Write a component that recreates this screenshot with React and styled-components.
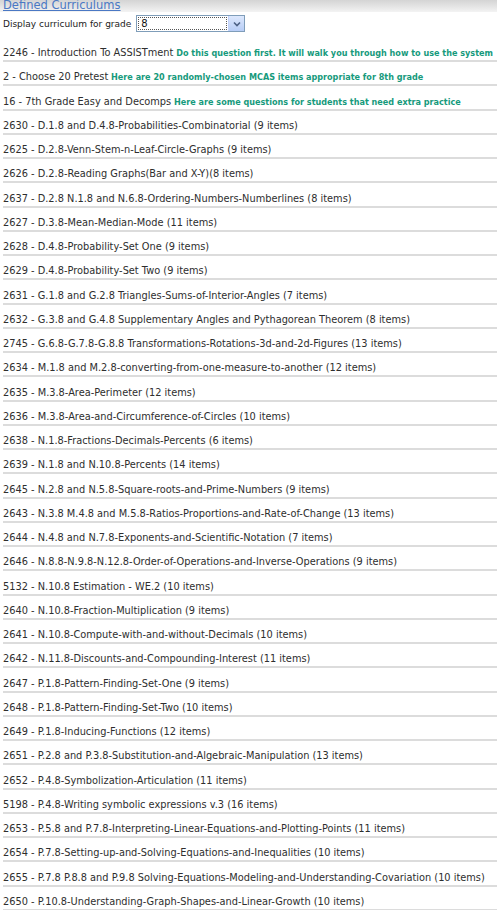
import React from "react";
import styled, { createGlobalStyle } from "styled-components";

const GlobalStyle = createGlobalStyle`
  body {
    margin: 0;
    background: #fff;
    font-family: "DejaVu Sans", Verdana, sans-serif;
    color: #333;
  }
`;

const curricula = [
  { id: 2246, name: "Introduction To ASSISTment", note: "Do this question first. It will walk you through how to use the system" },
  { id: 2, name: "Choose 20 Pretest", note: "Here are 20 randomly-chosen MCAS items appropriate for 8th grade" },
  { id: 16, name: "7th Grade Easy and Decomps", note: "Here are some questions for students that need extra practice" },
  { id: 2630, name: "D.1.8 and D.4.8-Probabilities-Combinatorial (9 items)" },
  { id: 2625, name: "D.2.8-Venn-Stem-n-Leaf-Circle-Graphs (9 items)" },
  { id: 2626, name: "D.2.8-Reading Graphs(Bar and X-Y)(8 items)" },
  { id: 2637, name: "D.2.8 N.1.8 and N.6.8-Ordering-Numbers-Numberlines (8 items)" },
  { id: 2627, name: "D.3.8-Mean-Median-Mode (11 items)" },
  { id: 2628, name: "D.4.8-Probability-Set One (9 items)" },
  { id: 2629, name: "D.4.8-Probability-Set Two (9 items)" },
  { id: 2631, name: "G.1.8 and G.2.8 Triangles-Sums-of-Interior-Angles (7 items)" },
  { id: 2632, name: "G.3.8 and G.4.8 Supplementary Angles and Pythagorean Theorem (8 items)" },
  { id: 2745, name: "G.6.8-G.7.8-G.8.8 Transformations-Rotations-3d-and-2d-Figures (13 items)" },
  { id: 2634, name: "M.1.8 and M.2.8-converting-from-one-measure-to-another (12 items)" },
  { id: 2635, name: "M.3.8-Area-Perimeter (12 items)" },
  { id: 2636, name: "M.3.8-Area-and-Circumference-of-Circles (10 items)" },
  { id: 2638, name: "N.1.8-Fractions-Decimals-Percents (6 items)" },
  { id: 2639, name: "N.1.8 and N.10.8-Percents (14 items)" },
  { id: 2645, name: "N.2.8 and N.5.8-Square-roots-and-Prime-Numbers (9 items)" },
  { id: 2643, name: "N.3.8 M.4.8 and M.5.8-Ratios-Proportions-and-Rate-of-Change (13 items)" },
  { id: 2644, name: "N.4.8 and N.7.8-Exponents-and-Scientific-Notation (7 items)" },
  { id: 2646, name: "N.8.8-N.9.8-N.12.8-Order-of-Operations-and-Inverse-Operations (9 items)" },
  { id: 5132, name: "N.10.8 Estimation - WE.2 (10 items)" },
  { id: 2640, name: "N.10.8-Fraction-Multiplication (9 items)" },
  { id: 2641, name: "N.10.8-Compute-with-and-without-Decimals (10 items)" },
  { id: 2642, name: "N.11.8-Discounts-and-Compounding-Interest (11 items)" },
  { id: 2647, name: "P.1.8-Pattern-Finding-Set-One (9 items)" },
  { id: 2648, name: "P.1.8-Pattern-Finding-Set-Two (10 items)" },
  { id: 2649, name: "P.1.8-Inducing-Functions (12 items)" },
  { id: 2651, name: "P.2.8 and P.3.8-Substitution-and-Algebraic-Manipulation (13 items)" },
  { id: 2652, name: "P.4.8-Symbolization-Articulation (11 items)" },
  { id: 5198, name: "P.4.8-Writing symbolic expressions v.3 (16 items)" },
  { id: 2653, name: "P.5.8 and P.7.8-Interpreting-Linear-Equations-and-Plotting-Points (11 items)" },
  { id: 2654, name: "P.7.8-Setting-up-and-Solving-Equations-and-Inequalities (10 items)" },
  { id: 2655, name: "P.7.8 P.8.8 and P.9.8 Solving-Equations-Modeling-and-Understanding-Covariation (10 items)" },
  { id: 2650, name: "P.10.8-Understanding-Graph-Shapes-and-Linear-Growth (10 items)" },
];

const Page = styled.div`
  width: 494px;
  padding: 0 4px 0 3px;
`;

const TitleBar = styled.div`
  height: 12px;
  margin-left: -3px;
  padding-left: 3px;
  display: flex;
  align-items: flex-end;
  overflow: hidden;
  background: linear-gradient(#d4d4d4, #f3f3f3);
`;

/* the heading sits partly above the top edge, as on a page scrolled a little */
const Title = styled.a`
  font-size: 11.5px;
  line-height: 13px;
  color: #4a78c4;
  text-decoration: underline;
`;

const GradeRow = styled.div`
  display: flex;
  align-items: center;
  gap: 5px;
  height: 19px;
  margin-top: 2px;
  font-size: 9px;
  color: #222;
`;

const Select = styled.div`
  display: flex;
  align-items: stretch;
  width: 109px;
  height: 17px;
  border: 1px solid #7f9db9;
  box-sizing: border-box;
  background: #fff;
`;

const SelectValue = styled.div`
  flex: 1;
  margin: 1px;
  padding-left: 2px;
  border: 1px dotted #555;
  font-size: 10px;
  line-height: 11px;
  color: #111;
`;

const ArrowButton = styled.div`
  width: 15px;
  display: flex;
  align-items: center;
  justify-content: center;
  background: linear-gradient(#dde8fd, #b7cdf6);
  border-left: 1px solid #c3d3fd;
`;

const List = styled.ul`
  list-style: none;
  margin: 13px 0 0;
  padding: 0;
`;

const Item = styled.li`
  font-size: 9.8px;
  line-height: 13px;
  height: 13px;
  padding-bottom: 1px;
  margin-bottom: 8.25px;
  border-bottom: 2px solid #dcdcdc;
  white-space: nowrap;
  color: #2e2e2e;
`;

const Note = styled.span`
  font-weight: bold;
  font-size: 8.1px;
  color: #169a7c;
`;

function Chevron() {
  return (
    <svg width="8" height="6" viewBox="0 0 8 6">
      <path d="M1 1.5 L4 4.5 L7 1.5" fill="none" stroke="#4d6185" strokeWidth="1.6" />
    </svg>
  );
}

export default function App() {
  return (
    <>
      <GlobalStyle />
      <Page>
        <TitleBar>
          <Title>Defined Curriculums</Title>
        </TitleBar>
        <GradeRow>
          <span>Display curriculum for grade</span>
          <Select>
            <SelectValue>8</SelectValue>
            <ArrowButton>
              <Chevron />
            </ArrowButton>
          </Select>
        </GradeRow>
        <List>
          {curricula.map((c) => (
            <Item key={c.id}>
              {c.id} - {c.name}
              {c.note && <Note> {c.note}</Note>}
            </Item>
          ))}
        </List>
      </Page>
    </>
  );
}
